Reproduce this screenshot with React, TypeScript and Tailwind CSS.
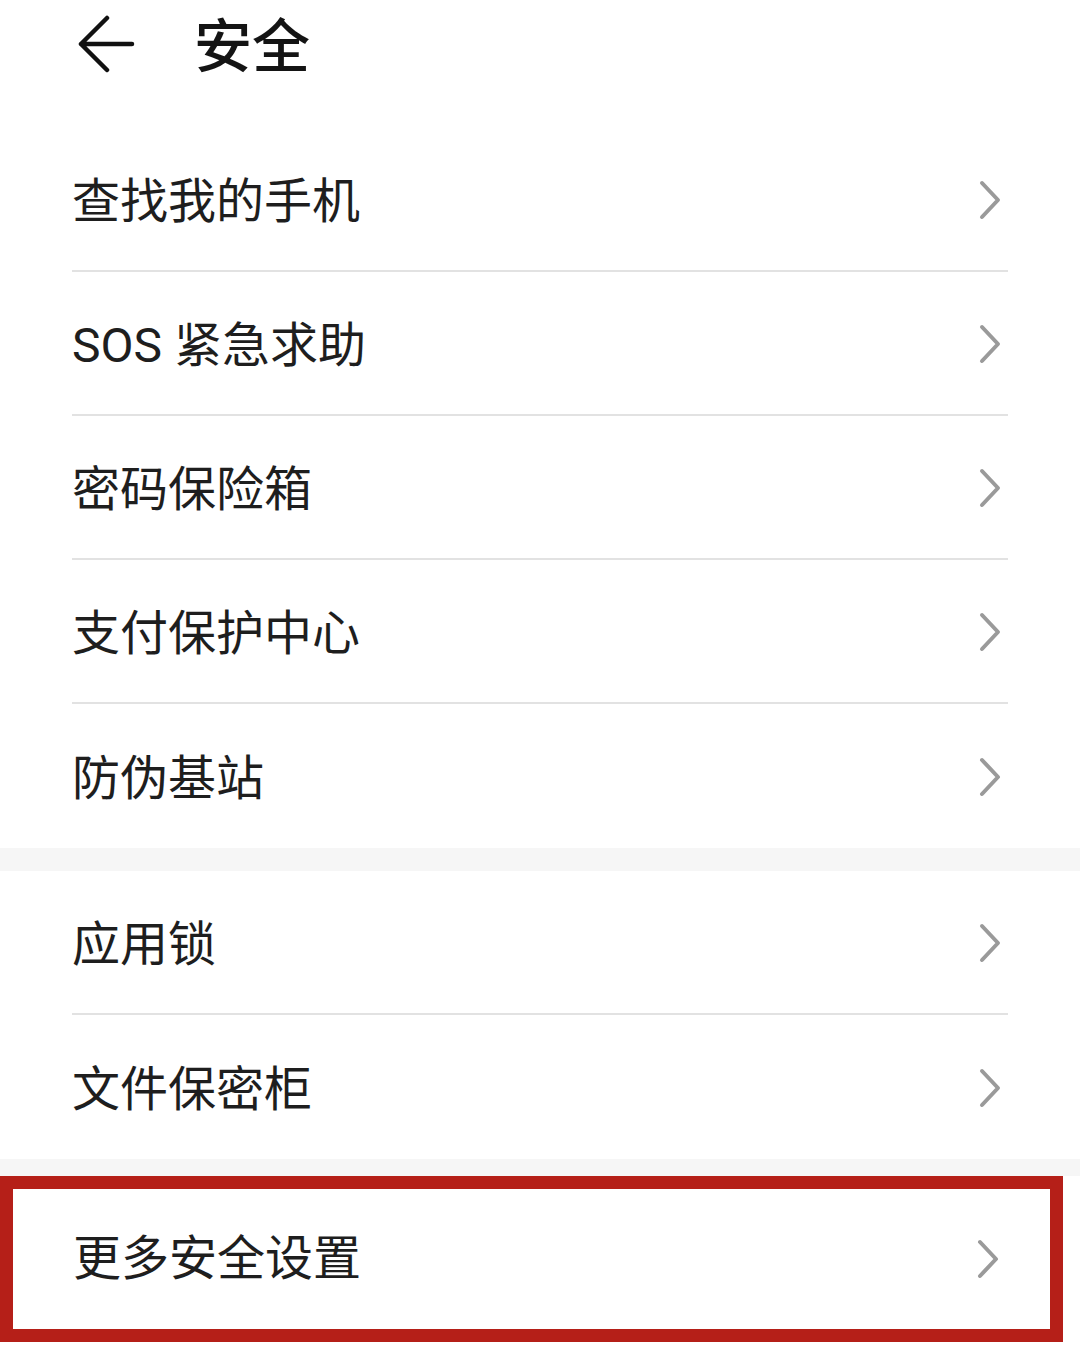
import { Fragment } from 'react';

const groupA = ['查找我的手机', 'SOS 紧急求助', '密码保险箱', '支付保护中心', '防伪基站'];
const groupB = ['应用锁', '文件保密柜'];

const Chevron = () => (
  <svg width="24" height="40" viewBox="0 0 24 40" fill="none" className="shrink-0">
    <path d="M4 3 L20 20 L4 37" stroke="#9a9a9a" strokeWidth="4" strokeLinecap="round" strokeLinejoin="round" />
  </svg>
);

const Row = ({ label, last }: { label: string; last?: boolean }) => (
  <div
    className={`flex h-[144px] items-center justify-between ${last ? '' : 'border-b-2 border-[#e2e2e2]'}`}
  >
    <span className="pt-[5px] text-[48px] leading-none text-[#1e1e1e]">{label}</span>
    <div className="mr-[6px] pt-[2px]">
      <Chevron />
    </div>
  </div>
);

export default function App() {
  return (
    <div
      className="min-h-[1357px] w-[1080px] bg-white"
      style={{ fontFamily: 'Roboto, "Noto Sans CJK SC", sans-serif' }}
    >
      {/* header */}
      <div className="flex h-[128px] items-start pl-[78px] pt-[15px]">
        <svg width="58" height="58" viewBox="0 0 58 58" fill="none">
          <path d="M29 3 L3 29 L29 55 M3 29 H54" stroke="#111" strokeWidth="4.5" strokeLinecap="round" strokeLinejoin="round" />
        </svg>
        <h1 className="ml-[58px] mt-[3px] text-[58px] font-medium leading-none text-[#141414]">安全</h1>
      </div>

      <div className="mx-[72px]">
        {groupA.map((label, i) => (
          <Row key={label} label={label} last={i === groupA.length - 1} />
        ))}
      </div>

      <div className="h-[23px] bg-[#f6f6f6]" />

      <div className="mx-[72px]">
        {groupB.map((label, i) => (
          <Fragment key={label}>
            <Row label={label} last={i === groupB.length - 1} />
          </Fragment>
        ))}
      </div>

      <div className="h-[17px] bg-[#f6f6f6]" />

      <div className="w-[1063px] border-[13px] border-[#b51f18]">
        <div className="flex h-[140px] items-center justify-between pl-[60px] pr-[50px]">
          <span className="text-[48px] leading-none text-[#1e1e1e]">更多安全设置</span>
          <Chevron />
        </div>
      </div>
    </div>
  );
}
